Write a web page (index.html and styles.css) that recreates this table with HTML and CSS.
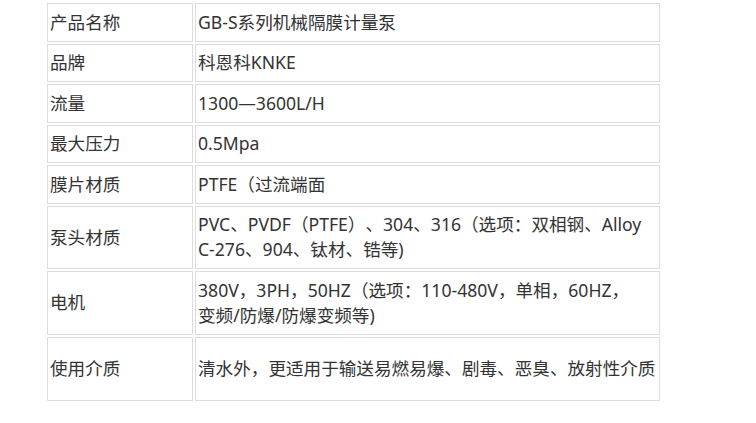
FILE: index.html
```html
<!DOCTYPE html>
<html lang="zh-CN">
<head>
  <meta charset="UTF-8" />
  <meta name="viewport" content="width=device-width, initial-scale=1.0"/>
  <title>GB-S系列机械隔膜计量泵</title>
  <link rel="stylesheet" href="styles.css">
</head>
<body>
  <table class="spec">
    <colgroup>
      <col class="spec-key">
      <col class="spec-val">
    </colgroup>
    <tr>
      <td>产品名称</td>
      <td>GB-S系列机械隔膜计量泵</td>
    </tr>
    <tr>
      <td>品牌</td>
      <td>科恩科KNKE</td>
    </tr>
    <tr>
      <td>流量</td>
      <td>1300—3600L/H</td>
    </tr>
    <tr>
      <td>最大压力</td>
      <td>0.5Mpa</td>
    </tr>
    <tr>
      <td>膜片材质</td>
      <td>PTFE（过流端面</td>
    </tr>
    <tr>
      <td>泵头材质</td>
      <td>PVC、PVDF（PTFE）、304、316（选项：双相钢、Alloy<br>C-276、904、钛材、锆等)</td>
    </tr>
    <tr>
      <td>电机</td>
      <td>380V，3PH，50HZ（选项：110-480V，单相，60HZ，<br>变频/防爆/防爆变频等)</td>
    </tr>
    <tr class="tall">
      <td>使用介质</td>
      <td>清水外，更适用于输送易燃易爆、剧毒、恶臭、放射性介质</td>
    </tr>
  </table>
</body>
</html>
```

FILE: styles.css
```css
body {
  margin: 0;
  background: #fff;
  font-family: "Noto Sans", "Noto Sans CJK SC", sans-serif;
  font-size: 17.6px;
  color: #333;
  text-spacing-trim: space-all;
}
.spec {
  margin: 1px 0 0 45px;
  border-collapse: separate;
  border-spacing: 2px;
  table-layout: fixed;
  width: 615px;
}
.spec-key {
  width: 146px;
}
.spec-val {
  width: 465px;
}
.spec td {
  border: 1px solid #ddd;
  padding: 5.75px 2px;
  line-height: 25px;
  vertical-align: middle;
}
.spec .tall td {
  height: 51px;
}
```
